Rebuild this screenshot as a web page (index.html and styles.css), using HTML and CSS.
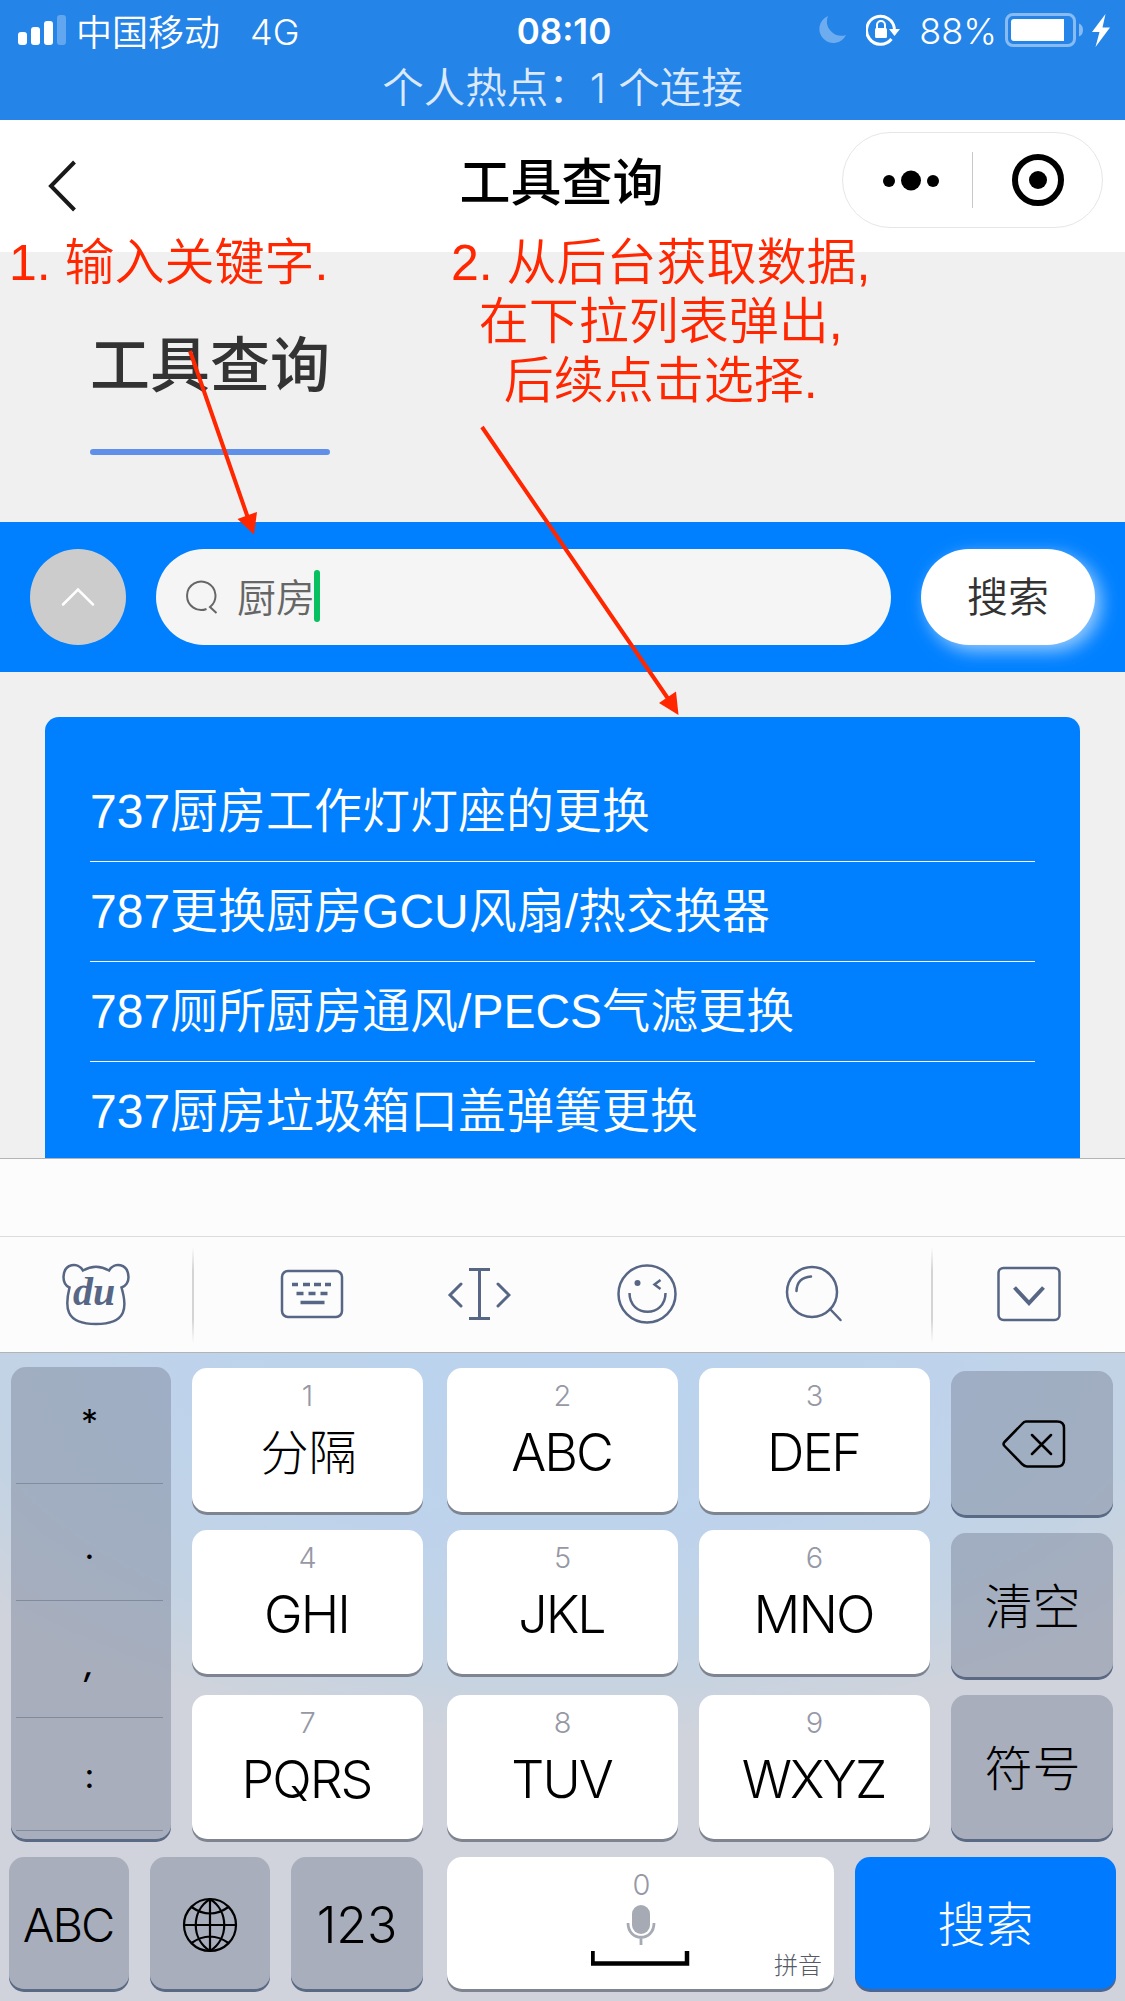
FILE: index.html
```html
<!DOCTYPE html>
<html lang="zh-CN">
<head>
<meta charset="utf-8">
<title>工具查询</title>
<link rel="stylesheet" href="styles.css">
</head>
<body>
<div class="screen">
  <header class="status">
    <div class="status-row">
      <div class="status-left">
        <svg class="signal" width="48" height="30" viewBox="0 0 48 30" fill="#fff"><rect x="0" y="17" width="9" height="13" rx="3"/><rect x="13" y="12" width="9" height="18" rx="3"/><rect x="26" y="6" width="9" height="24" rx="3"/><rect x="39" y="0" width="9" height="30" rx="3" opacity=".28"/></svg>
        <span class="carrier">中国移动</span><span class="network">4G</span>
      </div>
      <span class="time">08:10</span>
      <div class="status-right">
        <svg width="27" height="30" viewBox="0 0 27 30"><path d="M9 1A14 14 0 1 0 27 20A14.500 14.500 0 0 1 9 1Z" fill="#fff" opacity=".33"/></svg>
        <svg class="lock" width="34" height="32" viewBox="0 0 34 32"><path d="M25.500 25A14 14 0 1 1 28.500 15" fill="none" stroke="#fff" stroke-width="3"/><path d="M23 15H34L28.500 22Z" fill="#fff"/><rect x="9" y="14" width="12" height="10" rx="1.500" fill="#fff"/><path d="M11 15V11a4 4 0 0 1 8 0V15" fill="none" stroke="#fff" stroke-width="2"/></svg>
        <span class="percent">88%</span>
        <svg class="battery" width="78" height="34" viewBox="0 0 78 34"><rect x="1.500" y="1.500" width="68" height="31" rx="6.500" fill="none" stroke="#fff" stroke-width="3" opacity=".45"/><path d="M74 10.500Q78 12 78 17T74 23.500Z" fill="#fff" opacity=".45"/><path d="M9 6H59V28H9Q6 28 6 25V9Q6 6 9 6Z" fill="#fff"/></svg>
        <svg class="bolt" width="18" height="33" viewBox="0 0 18 33"><path d="M13.500 0L0 18H7.500L3.500 33L18 13.500H10.500Z" fill="#fff"/></svg>
      </div>
    </div>
    <div class="hotspot">个人热点：<span class="hotspot-count">1</span>个连接</div>
  </header>

  <nav class="nav">
    <svg class="back" width="30" height="52" viewBox="0 0 30 52"><path d="M26.500 2L3 26L26.500 50" fill="none" stroke="#191919" stroke-width="4"/></svg>
    <h1 class="nav-title">工具查询</h1>
    <div class="capsule">
      <svg width="259" height="94" viewBox="0 0 259 94"><circle cx="46" cy="48" r="6"/><circle cx="68" cy="47.500" r="10"/><circle cx="90" cy="48" r="6"/><path d="M129.500 19V75" stroke="#c8c8c8"/><circle cx="195" cy="47" r="23" fill="none" stroke="#000" stroke-width="6"/><circle cx="195" cy="47" r="9"/></svg>
    </div>
  </nav>

  <main class="page">
    <h2 class="heading">工具查询</h2>
    <div class="searchbar">
      <div class="fold"><svg width="34" height="20" viewBox="0 0 34 20"><path d="M2 17.500L17 2.500L32 17.500" fill="none" stroke="#fff" stroke-width="2.500" stroke-linecap="round"/></svg></div>
      <div class="field">
        <svg class="field-icon" width="34" height="34" viewBox="0 0 34 34"><path d="M21.500 29A14.200 14.200 0 1 1 25 27L31.500 33" fill="none" stroke="#666" stroke-width="2"/></svg>
        <span class="query">厨房</span><span class="caret"></span>
      </div>
      <div class="search-btn">搜索</div>
    </div>
    <ul class="results">
      <li>737厨房工作灯灯座的更换</li>
      <li>787更换厨房GCU风扇/热交换器</li>
      <li>787厕所厨房通风/PECS气滤更换</li>
      <li>737厨房垃圾箱口盖弹簧更换</li>
    </ul>
  </main>

  <section class="keyboard">
    <div class="candidates"></div>
    <div class="tools">
      <div class="tool tool-logo"><svg width="70" height="66" viewBox="0 0 70 66" fill="none" stroke="#566684" stroke-width="2.500"><path d="M22 9.500Q35 2 48 9.500C53 1 67 2 67.500 16Q67.500 24 60.500 26.500C66 45 67 63 35 63S4 45 8.500 26.500Q2.500 24 2.500 16C3 2 17 1 22 9.500Z"/></svg><span class="du">du</span></div>
      <i class="rule"></i>
      <div class="tool-group">
      <div class="tool">
        <svg width="64" height="50" viewBox="0 0 64 50" fill="none" stroke="#566684"><rect x="2" y="2" width="60" height="46" rx="6" stroke-width="2.500"/><path d="M12 15.500h6m5 0h7m4 0h7m4 0h6M16.500 24.500h7m5 0h7m5 0h7M20.500 33.500h24" stroke-width="3.500"/></svg>
      </div>
      <div class="tool">
        <svg width="64" height="54" viewBox="0 0 64 54" fill="none" stroke="#566684" stroke-width="3"><path d="M22 2.500H43M22 51.500H43M32.500 2.500V51.500"/><path d="M14 17L3 28L14 39M51 17L62 28L51 39" stroke-linecap="round"/></svg>
      </div>
      <div class="tool">
        <svg width="62" height="62" viewBox="0 0 62 62" fill="none" stroke="#566684" stroke-width="2.500"><circle cx="31" cy="31" r="28.500"/><path d="M13.500 30C13.500 55 49.500 55 49.500 30M44.500 17L38.500 21.500L44.500 26"/><circle cx="21.500" cy="20" r="3" fill="#566684" stroke="none"/></svg>
      </div>
      <div class="tool">
        <svg width="60" height="60" viewBox="0 0 60 60" fill="none" stroke="#566684" stroke-width="2.500" stroke-linecap="round"><circle cx="28" cy="28" r="25"/><path d="M12.500 27Q13 13.500 27 12.500M46 45L56.500 56"/></svg>
      </div>
      </div>
      <i class="rule"></i>
      <div class="tool tool-hide"><svg width="64" height="56" viewBox="0 0 64 56" fill="none" stroke="#566684"><rect x="1.500" y="2" width="61" height="52" rx="5" stroke-width="2.500"/><path d="M17.500 21.500L32 37L46.500 21.500" stroke-width="4"/></svg></div>
    </div>
    <div class="pad">
      <div class="pad-main">
        <div class="symbols key-dark"><span class="star">*</span><span class="dot">.</span><span class="comma">,</span><span class="colon">:</span></div>
        <div class="letters">
          <div class="key"><small>1</small><b class="cjk">分隔</b></div>
          <div class="key"><small>2</small><b>ABC</b></div>
          <div class="key"><small>3</small><b>DEF</b></div>
          <div class="key"><small>4</small><b>GHI</b></div>
          <div class="key"><small>5</small><b>JKL</b></div>
          <div class="key"><small>6</small><b>MNO</b></div>
          <div class="key"><small>7</small><b>PQRS</b></div>
          <div class="key"><small>8</small><b>TUV</b></div>
          <div class="key"><small>9</small><b>WXYZ</b></div>
        </div>
        <div class="actions">
          <div class="action key-dark erase"><svg width="64" height="48" viewBox="0 0 64 48" fill="none" stroke="#000" stroke-width="2.500" stroke-linecap="round" stroke-linejoin="round"><path d="M24 1.500H55Q62 1.500 62 8V40Q62 46.500 55 46.500H25Q22.500 46.500 20 44L2.500 26Q0.500 24 2.500 22L20 4Q22 1.500 24 1.500ZM30 15L49 34M49 15L30 34"/></svg></div>
          <div class="action key-dark">清空</div>
          <div class="action key-dark">符号</div>
        </div>
      </div>
      <div class="pad-bottom">
        <div class="fn key-dark abc">ABC</div>
        <div class="fn key-dark"><svg width="56" height="56" viewBox="0 0 56 56" fill="none" stroke="#000" stroke-width="2.200"><circle cx="28" cy="28" r="26"/><path d="M28 2V54M2 28H54M28 2C9 14 9 42 28 54M28 2C47 14 47 42 28 54M9.500 10Q28 23 46.500 10M9.500 46Q28 33 46.500 46"/></svg></div>
        <div class="fn key-dark num">123</div>
        <div class="space key"><small>0</small>
          <svg width="100" height="64" viewBox="0 0 100 64" fill="none"><rect x="41" y="2" width="18" height="29" rx="9" fill="#a5aab4"/><path d="M37 20C37 39 63 39 63 20M50 34V42" stroke="#a5aab4" stroke-width="2.800"/><path d="M1.500 48V60.500H96V48" stroke="#000" stroke-width="4.500"/></svg>
          <span class="pinyin">拼音</span>
        </div>
        <div class="fn go">搜索</div>
      </div>
    </div>
  </section>

  <div class="note note-1">1. 输入关键字.</div>
  <div class="note note-2">2. 从后台获取数据,<br>在下拉列表弹出,<br>后续点击选择.</div>
  <svg class="arrows" width="1125" height="760" viewBox="0 0 1125 760" fill="#ff2600" stroke="#ff2600" stroke-width="4"><path d="M190 351L248 518M482 427L669 700"/><path d="M254 534.500L237.500 519L257 512ZM678.500 715L659 703L676 691.500Z" stroke="none"/></svg>
</div>
</body>
</html>
```
FILE: styles.css
```css
* { box-sizing: border-box; }
body { margin: 0; font-family: "Liberation Sans", "Noto Sans CJK SC", sans-serif; }
svg { display: block; flex: none; }
h1, h2, ul { margin: 0; padding: 0; list-style: none; }
.screen { position: relative; width: 1125px; height: 2001px; overflow: hidden; display: flex; flex-direction: column; background: #f0f0f0; }

.status { height: 120px; flex: none; background: #2584e8; color: #fff; font-family: Inter, "Noto Sans CJK SC", sans-serif; }
.status-row { height: 60px; display: grid; grid-template-columns: 1fr 120px 1fr; padding: 0 15px 0 18px; align-items: center; }
.status-left, .status-right { display: flex; align-items: center; height: 60px; }
.status-right { justify-content: flex-end; }
.carrier { font-size: 36px; font-weight: 350; margin-left: 10px; margin-top: -1px; }
.network { font-size: 36px; font-weight: 300; margin: 3px 0 0 30px; }
.time { font-size: 35px; font-weight: 600; text-align: center; padding-top: 2px; }
.percent { font-size: 36px; font-weight: 300; margin: 2px 8px 0 19px; }
.lock { margin-left: 20px; }
.bolt { margin-left: 9px; }
.hotspot { height: 60px; line-height: 57px; font-size: 41.5px; font-weight: 350; text-align: center; color: #dce9fb; }
.hotspot-count { margin-right: 12px; font-weight: 300; }

.nav { height: 132px; flex: none; display: grid; grid-template-columns: 1fr 240px 1fr; align-items: center; background: #fff; padding: 0 22px 0 48px; }
.nav-title { font-size: 51px; line-height: 60px; font-weight: 500; text-align: center; white-space: nowrap; margin: -5px 28px 0 0; justify-self: center; }
.capsule { justify-self: end; border: 1px solid #e6e6e6; border-radius: 48px; width: 261px; height: 96px; margin-top: -12px; }

.page { height: 906px; flex: none; overflow: hidden; }
.heading { width: 240px; height: 203px; margin: 0 0 67px 90px; padding-top: 77px; font-size: 60px; line-height: 76px; font-weight: 500; color: #333; display: flex; flex-direction: column; justify-content: space-between; }
.heading::after { content: ""; height: 6px; border-radius: 3px; background: #5f8fe9; }
.searchbar { height: 150px; background: #0080ff; display: flex; align-items: center; padding: 0 30px; }
.fold { width: 96px; height: 96px; border-radius: 50%; background: #ccc; display: flex; align-items: center; justify-content: center; }
.field { width: 735px; height: 96px; margin: 0 30px; border-radius: 48px; background: #f5f5f5; display: flex; align-items: center; padding-left: 29px; }
.field-icon { margin-top: -1px; }
.query { font-size: 39px; font-weight: 350; margin: -5px -1px 0 18px; color: #666; }
.caret { width: 6px; height: 52px; border-radius: 3px; background: #07c160; margin-top: -2px; }
.search-btn { width: 174px; height: 96px; border-radius: 48px; background: #fff; box-shadow: 6px 6px 18px rgba(255,255,255,.6); font-size: 41px; font-weight: 350; line-height: 98px; text-align: center; color: #333; }
.results { margin: 45px 45px 0; height: 480px; padding: 45px 45px 0; background: #0080ff; border-radius: 14px; color: #fff; }
.results li { height: 100px; font-size: 48px; font-weight: 350; line-height: 100px; border-bottom: 1px solid #fff; white-space: nowrap; }

.keyboard { height: 843px; flex: none; background: #fcfcfc; border-top: 1px solid #b4b4b4; }
.candidates { height: 77px; }
.tools { height: 117px; border-top: 1px solid #dcdcdc; border-bottom: 1px solid #b4b4b4; display: flex; align-items: center; }
.tool { display: flex; align-items: center; justify-content: center; height: 115px; padding-bottom: 2px; }
.tool-logo { width: 192px; position: relative; }
.tool-group { display: grid; grid-template-columns: repeat(4, 167.5px); padding: 0 33px 0 34px; }
.tool-hide { flex: 1; }
.rule { width: 2px; height: 96px; background: linear-gradient(transparent, #d4d4d4 25%, #d4d4d4 75%, transparent); }
.du { position: absolute; left: 73px; top: 30px; font: italic bold 40px/50px "Liberation Serif", serif; color: #566684; }

.pad { height: 648px; padding: 14px 9px 0; background: radial-gradient(ellipse 760px 390px at 562px 0, #bbd3ee 0%, #bed3eb 50%, #c3d3e4 78%, #ccd3dd 94%, #d0d3db 100%); }
.pad-main { display: flex; height: 472px; }
.symbols, .key, .action, .fn { border-radius: 15px; }
.key-dark { background: rgba(128,138,158,.5); box-shadow: 0 3px 0 #5a6984; }
.symbols { margin-left: 2px; width: 160px; height: 472px; padding: 0 8px 0 5px; display: flex; flex-direction: column; }
.symbols span { height: 117px; border-bottom: 1px solid #808b9d; text-align: center; font: 400 34px/110px Inter, sans-serif; }
.symbols .dot { line-height: 126px; }
.symbols .comma { font-style: italic; font-weight: 500; line-height: 126px; }
.symbols .colon { height: 113px; line-height: 116px; }
.letters { margin: 1px 0 0 21px; display: grid; grid-template-columns: 255px 252px 231px; grid-template-rows: 162px 165px 144px; width: 738px; }
.letters .key { width: 231px; height: 144px; }
.key { background: #fff; box-shadow: 0 3px 0 #7f8590; display: flex; flex-direction: column; align-items: center; font-family: Inter, "Noto Sans CJK SC", sans-serif; }
.key small { font-size: 29px; line-height: 36px; margin-top: 10px; font-weight: 300; color: #9698a6; }
.key b { font-size: 52px; line-height: 64px; margin: 7px 2px 0 0; font-weight: 300; letter-spacing: -2px; }
.key b.cjk { font-size: 48px; letter-spacing: 0; margin: 7px 0 0 2px; }
.actions { margin: 4px 0 0 21px; display: grid; gap: 18px; grid-auto-rows: 144px; width: 162px; }
.action, .fn { display: flex; align-items: center; justify-content: center; padding-top: 4px; font: 300 48px/60px Inter, "Noto Sans CJK SC", sans-serif; }
.action { padding-left: 1px; }
.erase { padding: 2px 0 0 4px; }
.pad-bottom { display: grid; grid-template-columns: 120px 120px 132px 387px 261px; column-gap: 21px; margin-top: 18px; height: 132px; }
.abc { font-size: 47px; letter-spacing: -2px; padding-right: 2px; }
.num { font-size: 50px; }
.space { position: relative; margin-left: 3px; width: 387px; }
.space small { padding-left: 2px; }
.pinyin { position: absolute; right: 12px; bottom: 9px; font-size: 24px; line-height: 28px; font-weight: 300; color: #555b66; }
.go { width: 261px; margin-left: 3px; background: #007aff; color: #fff; box-shadow: 0 3px 0 #4c6795; }

.note { position: absolute; color: #ff2600; font-size: 50px; font-weight: 350; line-height: 59px; white-space: nowrap; text-align: center; }
.note-1 { left: 9px; top: 234px; }
.note-2 { left: 451px; top: 234px; }
.arrows { position: absolute; left: 0; top: 0; }
```
